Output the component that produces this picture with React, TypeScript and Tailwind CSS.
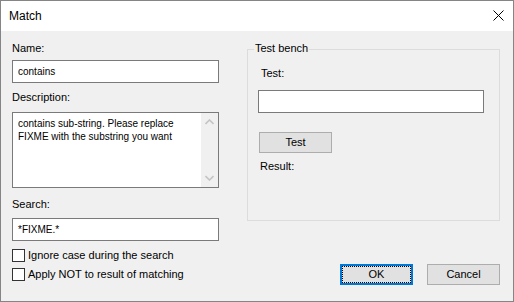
import React from "react";

const Chevron = ({ up }: { up?: boolean }) => (
  <svg width="9" height="6" viewBox="0 0 9 6" className="block">
    <path
      d={up ? "M0.5 5 L4.5 1 L8.5 5" : "M0.5 1 L4.5 5 L8.5 1"}
      fill="none"
      stroke="#c4c4c4"
      strokeWidth="1.6"
    />
  </svg>
);

const Checkbox = ({ label }: { label: string }) => (
  <div className="flex items-center h-[13px]">
    <div className="w-[13px] h-[13px] border border-[#333333] bg-white shrink-0" />
    <span className="ml-[3px] leading-[13px] -mt-[1px] whitespace-nowrap">{label}</span>
  </div>
);

export default function App() {
  return (
    <div className="w-[514px] h-[302px] border border-[#858585] bg-[#f0f0f0] flex flex-col text-[11px] leading-[13px] text-black font-['Liberation_Sans',Arial,sans-serif] overflow-hidden">
      <div className="h-[30px] bg-white flex items-center justify-between pl-[8px] pr-[9px] shrink-0">
        <span className="text-[12px] leading-[16px] -mt-[1px]">Match</span>
        <svg width="11" height="11" viewBox="0 0 11 11" className="block -mt-[1px]">
          <path d="M0.5 0.5 L10.5 10.5 M10.5 0.5 L0.5 10.5" stroke="#000" strokeWidth="1" />
        </svg>
      </div>
      <div className="flex flex-row pl-[11px] pt-[11px] flex-1">
        {/* left column */}
        <div className="w-[207px] flex flex-col">
          <div>Name:</div>
          <div className="mt-[5px] h-[23px] border border-[#7a7a7a] bg-white pl-[5px] pt-[4px] text-[10px]">contains</div>
          <div className="mt-[8px]">Description:</div>
          <div className="mt-[8px] h-[76px] border border-[#7a7a7a] bg-white flex">
            <div className="flex-1 pl-[5px] pt-[4px] text-[10px]">
              contains sub-string. Please replace FIXME with the substring you want
            </div>
            <div className="w-[17px] bg-[#f0f0f0] flex flex-col items-center justify-between py-[6px]">
              <Chevron up />
              <Chevron />
            </div>
          </div>
          <div className="mt-[10px]">Search:</div>
          <div className="mt-[7px] h-[23px] border border-[#7a7a7a] bg-white pl-[5px] pt-[4px] text-[10px]">*FIXME.*</div>
          <div className="mt-[8px]">
            <Checkbox label="Ignore case during the search" />
          </div>
          <div className="mt-[6px]">
            <Checkbox label="Apply NOT to result of matching" />
          </div>
        </div>
        {/* right column */}
        <div className="ml-[28px] w-[253px] flex flex-col pt-[7px]">
          <div className="relative h-[172px] border border-[#dcdcdc] pl-[10px] pt-[17px]">
            <span className="absolute left-[6px] -top-[8px] px-[1px] bg-[#f0f0f0]">Test bench</span>
            <div className="pl-[3px]">Test:</div>
            <div className="mt-[10px] w-[226px] h-[23px] border border-[#7a7a7a] bg-white" />
            <div className="mt-[19px] ml-[1px] w-[73px] h-[21px] border border-[#adadad] bg-[#e1e1e1] flex items-center justify-center">
              Test
            </div>
            <div className="mt-[7px] pl-[2px]">Result:</div>
          </div>
          <div className="mt-[43px] flex justify-end gap-[14px]">
            <div className="w-[73px] h-[21px] border-2 border-[#0078d7] bg-[#e1e1e1] p-0 flex">
              <div className="flex-1 border border-dotted border-black flex items-center justify-center">OK</div>
            </div>
            <div className="w-[73px] h-[21px] border border-[#adadad] bg-[#e1e1e1] flex items-center justify-center">
              Cancel
            </div>
          </div>
        </div>
      </div>
    </div>
  );
}
